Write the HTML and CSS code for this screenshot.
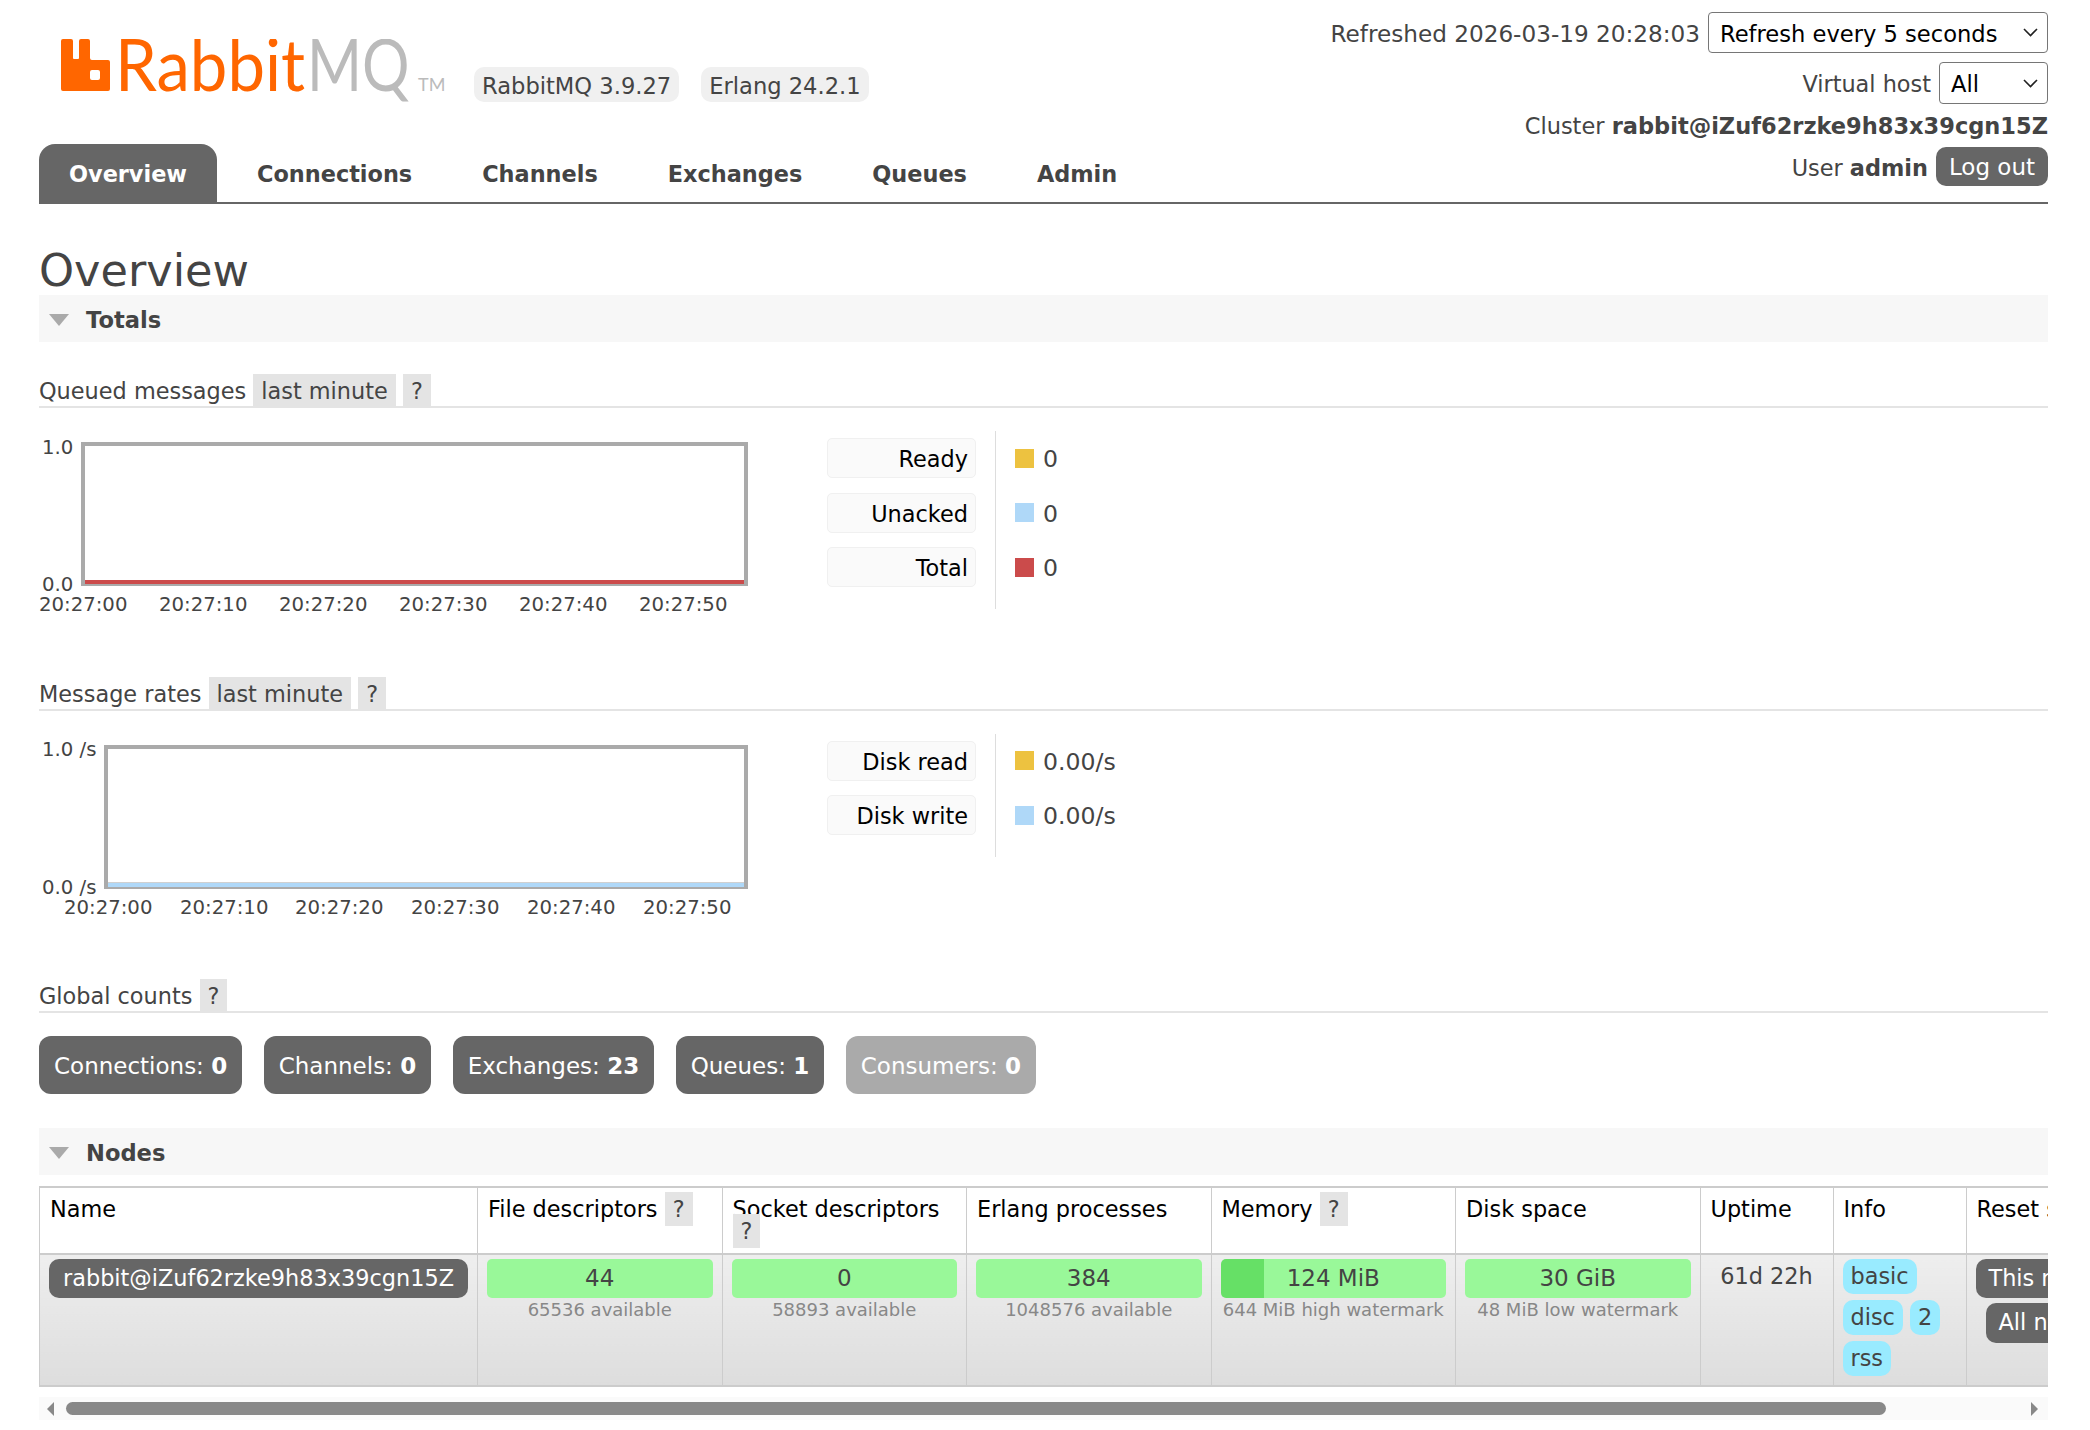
FILE: index.html
```html
<!DOCTYPE html>
<html lang="en">
<head>
	<meta charset="UTF-8">
	<title>RabbitMQ Management</title>
	<link rel="stylesheet" href="styles.css">
</head>
<body>
	<div class="header">
		<div class="headLeft">
			<div class="logoRow">
				<svg class="logo" width="390" height="66" viewBox="0 0 390 66">
					<path class="logoOrange" fill-rule="evenodd" d="M2 0h8a2 2 0 0 1 2 2v17a1 1 0 0 0 1 1h4a1 1 0 0 0 1-1V2a2 2 0 0 1 2-2h7a2 2 0 0 1 2 2v17a2 2 0 0 0 2 2h16a2 2 0 0 1 2 2v27a2 2 0 0 1-2 2H2a2 2 0 0 1-2-2V2a2 2 0 0 1 2-2zM31 31a2 2 0 0 0-2 2v6a2 2 0 0 0 2 2h6a2 2 0 0 0 2-2v-6a2 2 0 0 0-2-2z"/>
					<text class="logoOrange logoText" transform="translate(54 52) scale(.945 1)">Rabbit</text>
					<text class="logoGray logoText" transform="translate(246 52) scale(.835 1)">MQ</text>
					<text class="logoGray logoTm" x="357" y="52">TM</text>
				</svg>
				<span class="version">RabbitMQ 3.9.27</span>
				<span class="version">Erlang 24.2.1</span>
			</div>
			<ul class="tabs">
				<li class="tab selected">Overview</li>
				<li class="tab">Connections</li>
				<li class="tab">Channels</li>
				<li class="tab">Exchanges</li>
				<li class="tab">Queues</li>
				<li class="tab">Admin</li>
			</ul>
		</div>
		<div class="status">
			<div class="statusRow">
				<span class="refreshed">Refreshed 2026-03-19 20:28:03</span>
				<select class="refreshSelect"><option>Refresh every 5 seconds</option></select>
			</div>
			<div class="statusRow hostRow">
				<span>Virtual host</span>
				<select class="hostSelect"><option>All</option></select>
			</div>
			<div class="statusRow clusterRow">Cluster&nbsp;<b>rabbit@iZuf62rzke9h83x39cgn15Z</b></div>
			<div class="statusRow">
				<span>User <b>admin</b></span>
				<span class="logout">Log out</span>
			</div>
		</div>
	</div>

	<h1>Overview</h1>

	<div class="sectionBar"><i class="arrow"></i>Totals</div>

	<h3 class="subHead">Queued messages <span class="tag">last minute</span> <span class="tag">?</span></h3>
	<div class="chartRow">
		<svg class="chart" width="788" height="200">
			<rect class="plotBorder" x="44" y="13" width="663" height="140"/>
			<rect class="lineRed" x="46" y="149" width="659" height="4"/>
			<text class="axis" x="3" y="23">1.0</text>
			<text class="axis" x="3" y="160">0.0</text>
			<text class="axis" x="0" y="180">20:27:00</text>
			<text class="axis" x="120" y="180">20:27:10</text>
			<text class="axis" x="240" y="180">20:27:20</text>
			<text class="axis" x="360" y="180">20:27:30</text>
			<text class="axis" x="480" y="180">20:27:40</text>
			<text class="axis" x="600" y="180">20:27:50</text>
		</svg>
		<div class="legendLabels">
			<div class="legendLabel">Ready</div>
			<div class="legendLabel">Unacked</div>
			<div class="legendLabel">Total</div>
		</div>
		<div class="legendValues">
			<div class="legendValue"><i class="swatch yellow"></i>0</div>
			<div class="legendValue"><i class="swatch blue"></i>0</div>
			<div class="legendValue"><i class="swatch red"></i>0</div>
		</div>
	</div>

	<h3 class="subHead">Message rates <span class="tag">last minute</span> <span class="tag">?</span></h3>
	<div class="chartRow">
		<svg class="chart" width="788" height="200">
			<rect class="plotBorder" x="67" y="13" width="640" height="140"/>
			<rect class="lineGray" x="69" y="148" width="636" height="1"/>
			<rect class="lineBlue" x="69" y="149" width="636" height="4"/>
			<text class="axis" x="3" y="22">1.0 /s</text>
			<text class="axis" x="3" y="160">0.0 /s</text>
			<text class="axis" x="25" y="180">20:27:00</text>
			<text class="axis" x="141" y="180">20:27:10</text>
			<text class="axis" x="256" y="180">20:27:20</text>
			<text class="axis" x="372" y="180">20:27:30</text>
			<text class="axis" x="488" y="180">20:27:40</text>
			<text class="axis" x="604" y="180">20:27:50</text>
		</svg>
		<div class="legendLabels">
			<div class="legendLabel">Disk read</div>
			<div class="legendLabel">Disk write</div>
		</div>
		<div class="legendValues">
			<div class="legendValue"><i class="swatch yellow"></i>0.00/s</div>
			<div class="legendValue"><i class="swatch blue"></i>0.00/s</div>
		</div>
	</div>

	<h3 class="subHead">Global counts <span class="tag">?</span></h3>
	<div class="counts">
		<div class="count">Connections: <b>0</b></div>
		<div class="count">Channels: <b>0</b></div>
		<div class="count">Exchanges: <b>23</b></div>
		<div class="count">Queues: <b>1</b></div>
		<div class="count countOff">Consumers: <b>0</b></div>
	</div>

	<div class="sectionBar nodesBar"><i class="arrow"></i>Nodes</div>

	<div class="tableWrap">
		<table class="nodes">
			<colgroup>
				<col class="colName"><col class="colBar"><col class="colBar"><col class="colBar"><col class="colBar"><col class="colBar">
				<col class="colUptime"><col class="colInfo"><col class="colReset">
			</colgroup>
			<tr>
				<th>Name</th>
				<th>File descriptors <span class="tag">?</span></th>
				<th>Socket descriptors <span class="tag">?</span></th>
				<th>Erlang processes</th>
				<th>Memory <span class="tag">?</span></th>
				<th>Disk space</th>
				<th>Uptime</th>
				<th>Info</th>
				<th class="resetHead">Reset stats</th>
			</tr>
			<tr>
				<td><div class="nodeName">rabbit@iZuf62rzke9h83x39cgn15Z</div></td>
				<td><div class="bar">44</div><div class="sub">65536 available</div></td>
				<td><div class="bar">0</div><div class="sub">58893 available</div></td>
				<td><div class="bar">384</div><div class="sub">1048576 available</div></td>
				<td><div class="bar barMem">124 MiB</div><div class="sub">644 MiB high watermark</div></td>
				<td><div class="bar">30 GiB</div><div class="sub">48 MiB low watermark</div></td>
				<td class="uptime">61d 22h</td>
				<td>
					<div class="infoTags">
						<span class="info">basic</span>
						<span class="info">disc</span>
						<span class="info">2</span>
						<span class="info">rss</span>
					</div>
				</td>
				<td>
					<div class="resetBtn">This node</div>
					<div class="resetBtn resetAll">All nodes</div>
				</td>
			</tr>
		</table>
	</div>
	<div class="scrollBar">
		<i class="scrollLeft"></i>
		<div class="scrollThumb"></div>
		<i class="scrollRight"></i>
	</div>
</body>
</html>
```

FILE: styles.css
```css
*{
	margin: 0;
	padding: 0;
	box-sizing: border-box;
}
ul{
	list-style: none;
}
body{
	padding: 0 42px 0 39px;
	background: #fff;
	font-family: "DejaVu Sans", sans-serif;
	font-size: 22.4px;
	color: #444;
	overflow: hidden;
}
i{
	font-style: normal;
}

/* header */
.header{
	display: flex;
	justify-content: space-between;
	height: 204px;
	border-bottom: 2px solid #666;
}
.logoRow{
	display: flex;
	align-items: flex-start;
	height: 144px;
}
.logo{
	margin: 39px 23px 0 22px;
}
.logoOrange{
	fill: #f60;
}
.logoGray{
	fill: #bbb;
}
.logoText{
	font-family: Lato, sans-serif;
	font-size: 71px;
}
.logoTm{
	font-family: Lato, sans-serif;
	font-size: 18px;
}
.version{
	margin: 67px 22px 0 0;
	padding: 0 8px;
	height: 35px;
	line-height: 38px;
	background: #f0f0f0;
	border-radius: 10px;
	font-size: 22.6px;
}
.tabs{
	display: flex;
}
.tab{
	margin-right: 10px;
	padding: 0 30px;
	height: 59px;
	line-height: 60px;
	font-weight: bold;
}
.tab.selected{
	background: #666;
	border-radius: 16px 16px 0 0;
	color: #fff;
}
.status{
	padding-top: 12px;
}
.statusRow{
	display: flex;
	justify-content: flex-end;
	align-items: center;
	gap: 8px;
	white-space: nowrap;
}
.statusRow span{
	padding-top: 2px;
}
.refreshed{
	font-size: 23.15px;
}
.hostRow{
	margin-top: 9px;
}
.clusterRow{
	gap: 0;
	height: 43px;
	font-size: 22.5px;
}
select{
	appearance: none;
	height: 41px;
	padding: 2px 0 0 11px;
	background: #fff url("data:image/svg+xml,%3Csvg xmlns='http://www.w3.org/2000/svg' width='15' height='9'%3E%3Cpath d='M1 1l6.5 6.5L14 1' fill='none' stroke='%23222' stroke-width='1.6'/%3E%3C/svg%3E") no-repeat right 9px center;
	border: 1px solid #767676;
	border-radius: 4px;
	font-family: "DejaVu Sans", sans-serif;
	font-size: 22.6px;
	color: #000;
}
.refreshSelect{
	width: 340px;
}
.hostSelect{
	width: 109px;
	height: 42px;
}
.statusRow .logout{
	padding: 0 13px;
	height: 39px;
	line-height: 41px;
	background: #666;
	border-radius: 10px;
	font-size: 23px;
	color: #fff;
}

/* sections */
h1{
	margin-top: 38px;
	height: 53px;
	line-height: 58px;
	font-size: 44.6px;
	font-weight: normal;
}
.sectionBar{
	display: flex;
	align-items: center;
	padding-top: 2px;
	height: 47px;
	background: #f7f7f7;
	font-size: 22.6px;
	font-weight: bold;
}
.arrow{
	margin: 0 17px 0 10px;
	border-top: 12px solid #aaa;
	border-left: 10.5px solid transparent;
	border-right: 10.5px solid transparent;
}
.subHead{
	margin-top: 30px;
	height: 36px;
	line-height: 38px;
	border-bottom: 2px solid #e4e4e4;
	font-size: 22.4px;
	font-weight: normal;
}
.tag{
	padding: 4px 8px;
	background: #e4e4e4;
	color: #444;
}

/* charts */
.chartRow{
	display: flex;
	align-items: flex-start;
	margin-top: 23px;
	margin-bottom: 50.5px;
	height: 193px;
}
.chart{
	flex: none;
}
.plotBorder{
	fill: #fff;
	stroke: #aaa;
	stroke-width: 4px;
}
.lineRed{
	fill: #cb4b4b;
}
.lineBlue{
	fill: #afd8f8;
}
.lineGray{
	fill: #d0d0d0;
}
.axis{
	font-family: "DejaVu Sans", sans-serif;
	font-size: 19.7px;
	fill: #444;
}
.legendLabels{
	padding: 7px 19px 7px 0;
	width: 169px;
	border-right: 1px solid #ddd;
}
.legendLabel{
	margin-bottom: 14.5px;
	padding-right: 7px;
	height: 40px;
	line-height: 41px;
	background: #fafafa;
	border: 1px solid #f0f0f0;
	border-radius: 5px;
	text-align: right;
	color: #000;
}
.legendValues{
	padding: 7px 0 7px 19px;
}
.legendValue{
	display: flex;
	align-items: center;
	margin-bottom: 14.5px;
	padding-top: 2px;
	height: 40px;
	font-size: 23.6px;
}
.swatch{
	margin: -2px 9px 0 0;
	width: 19px;
	height: 19px;
}
.yellow{
	background: #edc240;
}
.blue{
	background: #afd8f8;
}
.red{
	background: #cb4b4b;
}

/* global counts */
.counts{
	display: flex;
	gap: 22px;
	margin-top: 23px;
}
.count{
	padding: 0 14.5px 0 15px;
	height: 58px;
	line-height: 60px;
	background: #666;
	border-radius: 12px;
	font-size: 23px;
	color: #fff;
}
.countOff{
	background: #aaa;
}
.nodesBar{
	margin-top: 34px;
}

/* nodes table */
.tableWrap{
	margin-top: 11px;
	overflow: hidden;
}
.nodes{
	table-layout: fixed;
	width: 2176px;
	border-collapse: collapse;
	border-top: 2px solid #ccc;
	border-bottom: 2px solid #ccc;
	border-left: 1px solid #ccc;
}
.colName{
	width: 438px;
}
.colBar{
	width: 244.5px;
}
.colUptime{
	width: 133px;
}
.colInfo{
	width: 133px;
}
th{
	padding: 10px 10px 0;
	height: 67px;
	line-height: 22px;
	border-right: 1px solid #ccc;
	border-bottom: 2px solid #ccc;
	vertical-align: top;
	text-align: left;
	font-weight: normal;
	color: #000;
	white-space: normal;
	overflow: hidden;
}
.resetHead{
	white-space: nowrap;
}
td{
	padding: 4px 9px 0;
	height: 132px;
	border-right: 1px solid #ccc;
	background: linear-gradient(#eee, #ddd);
	vertical-align: top;
}
.nodeName{
	height: 39px;
	line-height: 38px;
	background: #666;
	border-radius: 10px;
	text-align: center;
	color: #fff;
	white-space: nowrap;
}
.bar{
	height: 39px;
	line-height: 38px;
	background: #99f899;
	border-radius: 5px;
	font-size: 23px;
	text-align: center;
}
.barMem{
	background: linear-gradient(90deg, #66e066 43px, #99f899 43px);
}
.sub{
	margin-top: 1px;
	font-size: 18px;
	text-align: center;
	color: #888;
	white-space: nowrap;
}
.uptime{
	padding-top: 3px;
	line-height: 36px;
	text-align: center;
}
.infoTags{
	display: flex;
	flex-wrap: wrap;
	gap: 6px 7px;
}
.info{
	padding: 0 8px;
	height: 35px;
	line-height: 34px;
	background: #99ebff;
	border-radius: 10px;
}
.resetBtn{
	width: 142px;
	padding-left: 13px;
	height: 39px;
	line-height: 39px;
	background: #666;
	border-radius: 10px;
	color: #fff;
	white-space: nowrap;
}
.resetAll{
	margin: 5px 0 0 10px;
	height: 40px;
}

/* scrollbar drawn by hand, the table is clipped */
.scrollBar{
	display: flex;
	align-items: center;
	margin-top: 10px;
	padding-left: 8px;
	height: 23px;
	background: #fafafa;
}
.scrollLeft{
	border-right: 7px solid #888;
	border-top: 7px solid transparent;
	border-bottom: 7px solid transparent;
}
.scrollThumb{
	margin-left: 12px;
	width: 1820px;
	height: 13px;
	background: #888;
	border-radius: 7px;
}
.scrollRight{
	margin-left: 145px;
	border-left: 7px solid #888;
	border-top: 7px solid transparent;
	border-bottom: 7px solid transparent;
}
```
